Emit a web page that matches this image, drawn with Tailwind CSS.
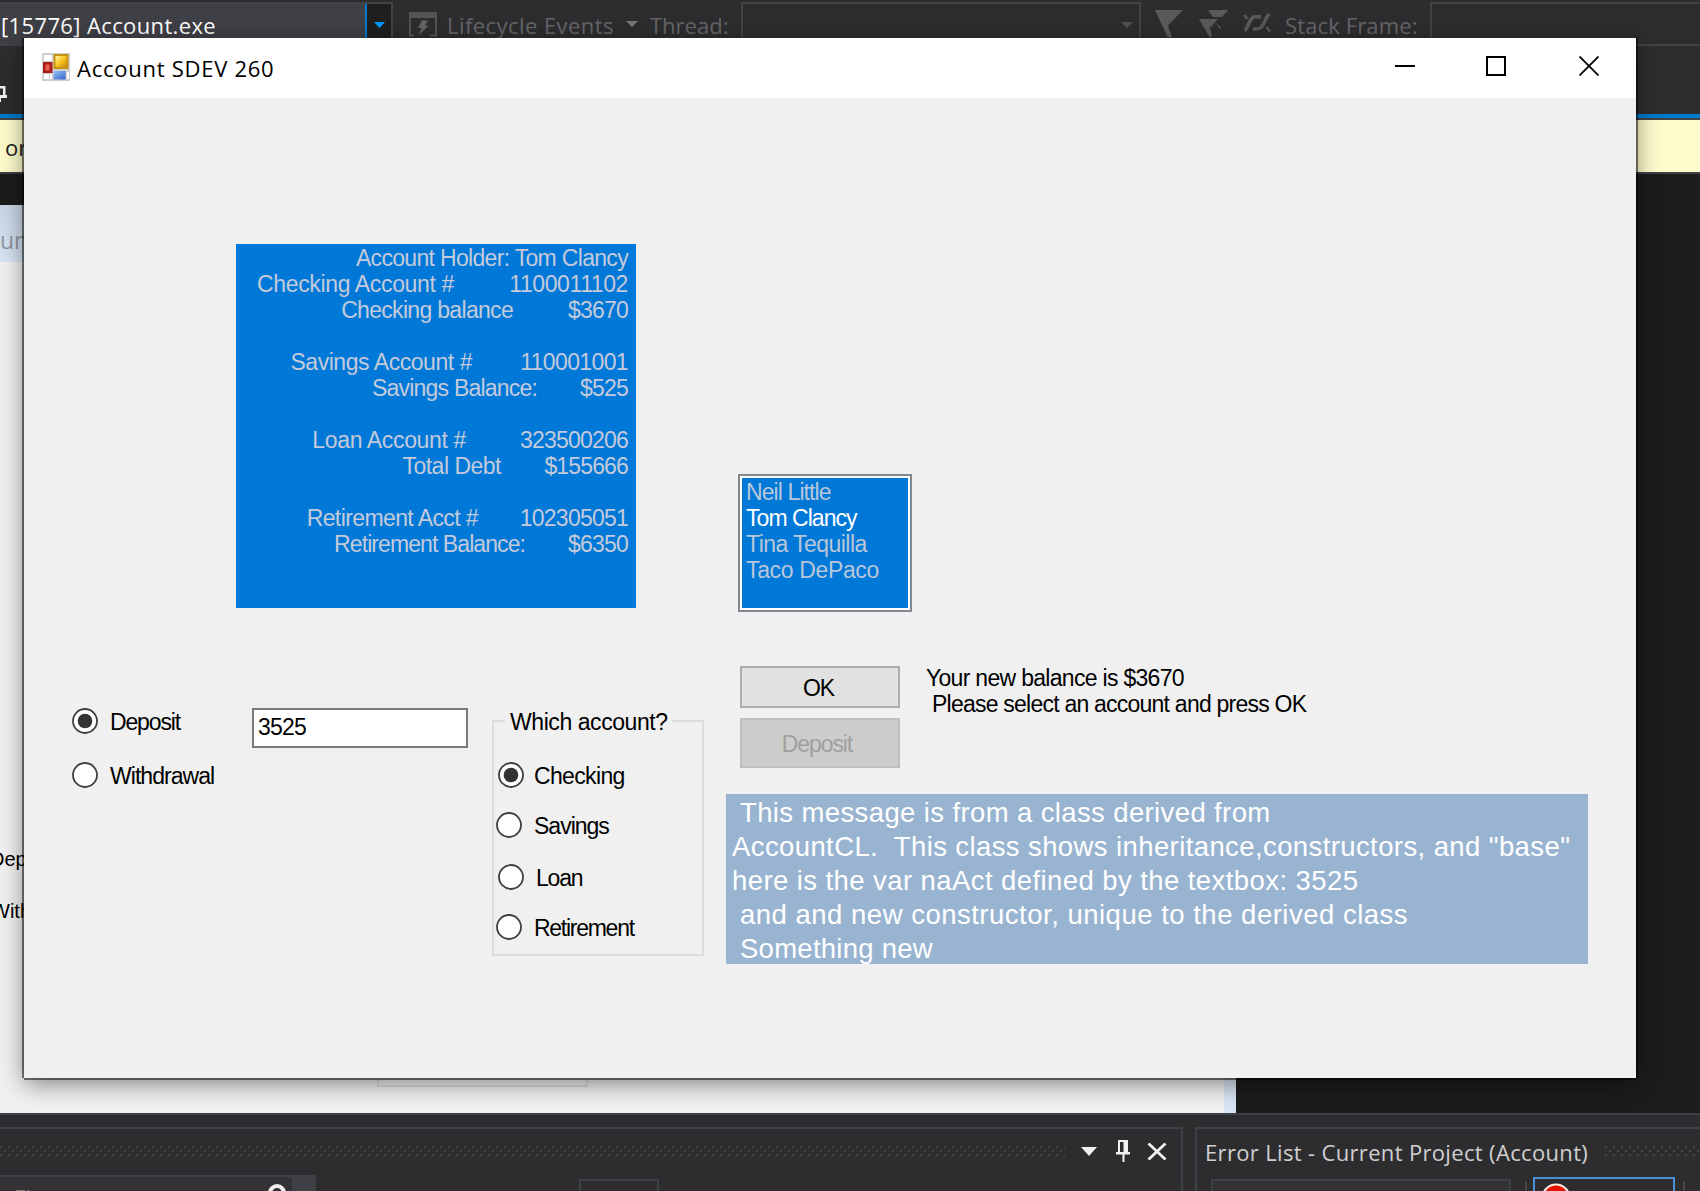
<!DOCTYPE html>
<html lang="en">
<head>
<meta charset="utf-8">
<title>Account SDEV 260</title>
<script src="https://cdn.jsdelivr.net/npm/@tailwindcss/browser@4"></script>
</head>
<body class="relative h-[1191px] w-[1700px] overflow-hidden bg-[#2d2d30] font-['Open_Sans',sans-serif] text-[22px] leading-[30px] whitespace-nowrap">

<!-- IDE behind the window -->
<div class="flex h-[1191px] flex-col overflow-hidden">
  <!-- Debug toolbar -->
  <div class="flex h-[46px] shrink-0 items-start pt-[2px] text-[#656568]">
    <div class="flex h-[44px] w-[393px] shrink-0 border-y-2 border-r-2 border-[#434346] bg-[#3f3f46] text-white">
      <div class="w-[365px] shrink-0 pt-[6px] pl-px tracking-[0.37px]">[15776] Account.exe</div>
      <div class="flex flex-1 border-l-2 border-[#007acc] bg-[#1f1f20] pt-[18px] pl-[7px]">
        <svg width="11" height="6"><path d="M0 0h11L5.500 6z" fill="#0097fb"/></svg>
      </div>
    </div>
    <svg class="mt-[10px] ml-[16px] shrink-0" width="28" height="25" viewBox="0 0 28 25"><path d="M0 0h28v24.500h-7v-2h5V6H2v16.500h3v2H0z" fill="#555558"/><path d="M13 8.500h6l-3 5h3.500L10 23l2.500-7H9z" fill="#656568"/></svg>
    <div class="mt-[8px] ml-[10px] w-[179px] shrink-0 tracking-[0.44px]">Lifecycle Events</div>
    <svg class="mt-[19px] shrink-0" width="12" height="6"><path d="M0 0h12L6 6z" fill="#77777a"/></svg>
    <div class="mt-[8px] ml-[12px] w-[91px] shrink-0">Thread:</div>
    <div class="flex h-[44px] w-[400px] shrink-0 justify-end border-2 border-[#434346] pt-[18px] pr-[6px]">
      <svg width="12" height="6"><path d="M0 0h12L6 6z" fill="#505053"/></svg>
    </div>
    <svg class="mt-[8px] ml-[14px] shrink-0" width="28" height="28" viewBox="0 0 28 28"><path d="M0 0h28L13 15.500l4 12L12.500 27z" fill="#5a5a5d"/></svg>
    <svg class="mt-[8px] ml-[16px] shrink-0" width="30" height="28" viewBox="0 0 30 28"><path d="M9 0h20l-6 7H14zM0 9h19l-8 9 2 7-2 3zM17 13l4.500 4v3z" fill="#5a5a5d"/></svg>
    <svg class="mt-[11px] ml-[14px] shrink-0" width="28" height="20" viewBox="0 0 28 20"><g fill="none" stroke="#5a5a5d" stroke-width="3.500"><path d="M1.500 17.500C6 15 6 4 12 3.800h6M10 16c7 0.500 9-1.500 11-6s3-7 5.500-9"/><path d="M1 2l3.500 4M23.500 14l3.500 4.500" stroke-width="2.500"/></g></svg>
    <div class="mt-[8px] ml-[14px] w-[145px] shrink-0 tracking-[0.13px]">Stack Frame:</div>
    <div class="h-[44px] flex-1 border-y-2 border-l-2 border-[#434346]"></div>
  </div>
  <!-- Tool window caption strip -->
  <div class="h-[68px] shrink-0 pt-[40px]">
    <svg width="8" height="16"><path d="M0 0h5.500v9H7v3H1v4H0V9h3V2.500H0z" fill="#f1f1f1"/></svg>
  </div>
  <div class="h-[6px] shrink-0 border-b-2 border-[#434346] bg-[#007acc]"></div>
  <div class="h-[54px] shrink-0 border-b-2 border-[#3f3f46] bg-[#fdfbcb] pt-[12px] pl-[5px] text-[#1e1e1e]">or</div>
  <!-- Designer surface -->
  <div class="h-[939px] shrink-0 bg-[#1c1c1c] pt-[31px]">
    <div class="flex h-[908px] w-[1236px] flex-col border-r-[12px] border-[#d7e4f2] bg-[#f0f0f0] font-['Liberation_Sans',sans-serif] text-[20px] leading-[24px] text-black">
      <div class="h-[57px] w-full shrink-0 bg-linear-to-b from-[#c8d5e4] to-[#d7e4f2] pt-[20px] font-['Open_Sans',sans-serif] text-[23px] leading-[30px] text-[#8e959d]">un</div>
      <div class="mt-[585px] -ml-[10px]">Dep</div>
      <div class="mt-[28px] -ml-[9px]">With</div>
      <div class="mt-[60px] ml-[377px] h-[104px] w-[211px] border-2 border-[#dcdcdc]"></div>
    </div>
  </div>
  <!-- Docked panes -->
  <div class="flex h-[78px] shrink-0 border-t-2 border-[#3f3f46] pt-[12px]">
    <div class="w-[1183px] shrink-0 border-t-2 border-r-2 border-[#3f3f46]">
      <div class="flex h-[46px] items-start">
        <svg class="mt-[17px]" width="1065" height="10"><defs><pattern id="grip" width="8" height="10" patternUnits="userSpaceOnUse"><path d="M0 0h2v2H0zM4 4h2v2H4zM0 8h2v2H0z" fill="#46464a"/></pattern></defs><rect width="1065" height="10" fill="url(#grip)"/></svg>
        <svg class="mt-[18px] ml-[16px]" width="16" height="9"><path d="M0 0h16L8 9z" fill="#f1f1f1"/></svg>
        <svg class="mt-[11px] ml-[19px]" width="14" height="22"><path d="M2 0h10v12h2v2.500H8.500V22h-2v-7.500H0V12h2zM4 2v10h3.500V2z" fill="#f1f1f1" fill-rule="evenodd"/></svg>
        <svg class="mt-[14px] ml-[17px]" width="20" height="17"><path d="M1.500 0.500l17 16M18.500 0.500l-17 16" stroke="#f1f1f1" stroke-width="2.800"/></svg>
      </div>
      <div class="flex h-[16px] items-start overflow-hidden">
        <div class="flex h-[16px] w-[292px] shrink-0 border-t-2 border-[#3f3f46] bg-[#333337]">
          <svg class="mt-[13px] ml-[16px]" width="14" height="3"><path d="M0 0h9v2H0zM11 0h2v2h-2z" fill="#77777a"/></svg>
          <svg class="mt-[7px] ml-[238px]" width="18" height="18"><circle cx="9" cy="9" r="7" fill="none" stroke="#f1f1f1" stroke-width="4"/></svg>
        </div>
        <div class="h-[16px] w-[24px] shrink-0 bg-[#3f3f46]"></div>
        <div class="mt-[4px] ml-[263px] h-[20px] w-[80px] shrink-0 border-2 border-[#3f3f46]"></div>
      </div>
    </div>
    <div class="ml-[12px] flex-1 border-t-2 border-l-2 border-[#3f3f46]">
      <div class="flex h-[46px] items-start">
        <div class="mt-[8px] ml-[8px] w-[400px] shrink-0 tracking-[0.34px] text-[#d0d0d0]">Error List - Current Project (Account)</div>
        <svg class="mt-[17px] shrink-0" width="95" height="10"><rect width="95" height="10" fill="url(#grip)"/></svg>
      </div>
      <div class="flex h-[16px] items-start overflow-hidden">
        <div class="mt-[4px] ml-[14px] h-[20px] w-[300px] shrink-0 border-2 border-[#3f3f46] bg-[#333337]"></div>
        <div class="mt-[6px] ml-[14px] h-[14px] w-[2px] shrink-0 bg-[#46464a]"></div>
        <div class="mt-[2px] ml-[6px] h-[20px] w-[142px] shrink-0 border-2 border-[#4a90d6] pl-[6px]">
          <svg class="mt-[4px]" width="30" height="30"><circle cx="15" cy="15" r="13.500" fill="#e51400" stroke="#f6ece0" stroke-width="2"/><path d="M9 9l12 12M21 9L9 21" stroke="#fff" stroke-width="3"/></svg>
        </div>
        <div class="mt-[6px] ml-[8px] h-[14px] w-[2px] shrink-0 bg-[#46464a]"></div>
      </div>
    </div>
  </div>
</div>

<!-- Account window -->
<div class="absolute top-[38px] left-[24px] flex h-[1040px] w-[1612px] flex-col bg-[#f0f0f0] text-black shadow-[-2px_0_0_rgba(0,0,0,0.5),2px_0_0_rgba(0,0,0,0.5),0_2px_0_rgba(0,0,0,0.5),0_6px_22px_rgba(0,0,0,0.45)]">
  <div class="flex h-[60px] shrink-0 items-start bg-white">
    <svg class="mt-[15px] ml-[18px]" width="28" height="28" viewBox="0 0 28 28">
      <defs>
        <linearGradient id="gold" x2="1" y2="1"><stop stop-color="#fff0a0"/><stop offset=".5" stop-color="#f9c520"/><stop offset="1" stop-color="#c98a10"/></linearGradient>
        <linearGradient id="blue" x2="1" y2="1"><stop stop-color="#9cc4f8"/><stop offset="1" stop-color="#2c62c8"/></linearGradient>
      </defs>
      <path d="M0 0h28v28H0z" fill="#cfcfcf"/>
      <path d="M2 2h8v6H2zM2 21h5v5H2zM8 21h2v5H8zM25 19h2v7h-2z" fill="#fff"/>
      <path d="M11.500 1h15v15h-15z" fill="#c69214"/><path d="M13.500 3h11v11h-11z" fill="url(#gold)"/>
      <path d="M1 9h9.500v11H1z" fill="#a81c1c"/><path d="M3.500 11.500h4v6h-4z" fill="#e8604c"/>
      <path d="M11.500 18h12v8.500h-12z" fill="url(#blue)"/>
    </svg>
    <div class="mt-[15px] ml-[7px] w-[1318px] tracking-[0.74px]">Account SDEV 260</div>
    <svg class="mt-[27px]" width="20" height="2"><path d="M0 0h20v2H0z"/></svg>
    <svg class="mt-[18px] ml-[71px]" width="20" height="20"><path d="M1 1h18v18H1z" fill="none" stroke="#000" stroke-width="2"/></svg>
    <svg class="mt-[18px] ml-[73px]" width="20" height="20"><path d="M.5.5l19 19M19.500.5l-19 19" stroke="#000" stroke-width="1.800"/></svg>
  </div>

  <div class="font-['Liberation_Sans',sans-serif] text-[23px] leading-[26px]">
    <div class="flex items-start pt-[146px] pl-[212px]">
      <!-- Account summary -->
      <div class="h-[364px] w-[400px] bg-[#0078d7] pt-px pr-[8px] text-[#c4cadb]">
        <div class="text-right tracking-[-0.68px]">Account Holder: Tom Clancy</div>
        <div class="flex justify-end"><span class="tracking-[-0.35px]">Checking Account #</span><span class="w-[174px] text-right tracking-[-0.4px]">1100011102</span></div>
        <div class="flex justify-end"><span class="tracking-[-0.69px]">Checking balance</span><span class="w-[115px] text-right tracking-[-0.8px]">$3670</span></div>
        <div class="mt-[26px] flex justify-end"><span class="tracking-[-0.45px]">Savings Account #</span><span class="w-[156px] text-right tracking-[-0.62px]">110001001</span></div>
        <div class="flex justify-end"><span class="tracking-[-0.8px]">Savings Balance:</span><span class="w-[91px] text-right tracking-[-0.8px]">$525</span></div>
        <div class="mt-[26px] flex justify-end"><span class="tracking-[-0.35px]">Loan Account #</span><span class="w-[162px] text-right tracking-[-0.8px]">323500206</span></div>
        <div class="flex justify-end"><span class="tracking-[-0.5px]">Total Debt</span><span class="w-[127px] text-right tracking-[-0.85px]">$155666</span></div>
        <div class="mt-[26px] flex justify-end"><span class="tracking-[-0.6px]">Retirement Acct #</span><span class="w-[150px] text-right tracking-[-0.77px]">102305051</span></div>
        <div class="flex justify-end"><span class="tracking-[-0.92px]">Retirement Balance:</span><span class="w-[103px] text-right tracking-[-0.8px]">$6350</span></div>
      </div>
      <!-- Customer list -->
      <div class="mt-[230px] ml-[102px] h-[138px] w-[174px] border-2 border-[#828790] bg-white p-[2px]">
        <div class="h-full bg-[#0078d7] pt-px pl-[4px] text-[#b9c6da]">
          <div class="tracking-[-0.9px]">Neil Little</div>
          <div class="tracking-[-0.95px] text-white">Tom Clancy</div>
          <div class="tracking-[-0.55px]">Tina Tequilla</div>
          <div class="tracking-[-0.35px]">Taco DePaco</div>
        </div>
      </div>
    </div>

    <div class="flex items-start">
      <!-- Transaction type -->
      <div class="mt-[96px] ml-[48px] w-[180px]">
        <div class="flex h-[26px] gap-[12px]">
          <svg width="26" height="26"><circle cx="13" cy="13" r="12" fill="#fff" stroke="#404040" stroke-width="1.800"/><circle cx="13" cy="13" r="7.300" fill="#333"/></svg>
          <span class="mt-px tracking-[-1.15px]">Deposit</span>
        </div>
        <div class="mt-[28px] flex h-[26px] gap-[12px]">
          <svg width="26" height="26"><circle cx="13" cy="13" r="12" fill="#fff" stroke="#404040" stroke-width="1.800"/></svg>
          <span class="mt-px tracking-[-0.95px]">Withdrawal</span>
        </div>
      </div>
      <div class="mt-[96px] h-[40px] w-[216px] border-2 border-[#7a7a7a] bg-white pt-[4px] pl-[4px] tracking-[-0.8px]">3525</div>
      <!-- Account group -->
      <div class="mt-[108px] ml-[24px] h-[236px] w-[212px] border-2 border-[#dcdcdc]">
        <div class="-mt-[13px] ml-[11px] w-[167px] bg-[#f0f0f0] pl-[5px] tracking-[-0.43px]">Which account?</div>
        <div class="mt-[27px] ml-[4px] flex h-[26px] gap-[10px]">
          <svg width="26" height="26"><circle cx="13" cy="13" r="12" fill="#fff" stroke="#404040" stroke-width="1.800"/><circle cx="13" cy="13" r="7.300" fill="#333"/></svg>
          <span class="mt-px tracking-[-0.65px]">Checking</span>
        </div>
        <div class="mt-[24px] ml-[2px] flex h-[26px] gap-[12px]">
          <svg width="26" height="26"><circle cx="13" cy="13" r="12" fill="#fff" stroke="#404040" stroke-width="1.800"/></svg>
          <span class="mt-px tracking-[-1px]">Savings</span>
        </div>
        <div class="mt-[26px] ml-[4px] flex h-[26px] gap-[12px]">
          <svg width="26" height="26"><circle cx="13" cy="13" r="12" fill="#fff" stroke="#404040" stroke-width="1.800"/></svg>
          <span class="mt-px tracking-[-1.2px]">Loan</span>
        </div>
        <div class="mt-[24px] ml-[2px] flex h-[26px] gap-[12px]">
          <svg width="26" height="26"><circle cx="13" cy="13" r="12" fill="#fff" stroke="#404040" stroke-width="1.800"/></svg>
          <span class="mt-px tracking-[-1.27px]">Retirement</span>
        </div>
      </div>
      <!-- Actions and messages -->
      <div class="mt-[54px] ml-[22px]">
        <div class="flex pl-[14px]">
          <div class="flex w-[160px] flex-col gap-[10px]">
            <div class="flex h-[42px] items-center justify-center border-2 border-[#adadad] bg-[#e1e1e1] pt-px pr-[3px] tracking-[-1px]">OK</div>
            <div class="flex h-[50px] items-center justify-center border-2 border-[#bfbfbf] bg-[#cccccc] pt-px pr-[6px] tracking-[-1.1px] text-[#a0a0a0]">Deposit</div>
          </div>
          <div class="-mt-px ml-[26px]">
            <div class="tracking-[-0.7px]">Your new balance is $3670</div>
            <div class="pl-[6px] tracking-[-0.77px]">Please select an account and press OK</div>
          </div>
        </div>
        <div class="mt-[26px] h-[170px] w-[862px] bg-[#99b4d1] pt-[2px] pl-[6px] text-[27.5px] leading-[34px] text-white">
          <div class="pl-[8px] tracking-[0.38px]">This message is from a class derived from</div>
          <div class="tracking-[0.4px]">AccountCL.&nbsp; This class shows inheritance,constructors, and "base"</div>
          <div class="tracking-[0.42px]">here is the var naAct defined by the textbox: 3525</div>
          <div class="pl-[8px] tracking-[0.5px]">and and new constructor, unique to the derived class</div>
          <div class="pl-[8px] tracking-[0.26px]">Something new</div>
        </div>
      </div>
    </div>
  </div>
</div>
</body>
</html>
